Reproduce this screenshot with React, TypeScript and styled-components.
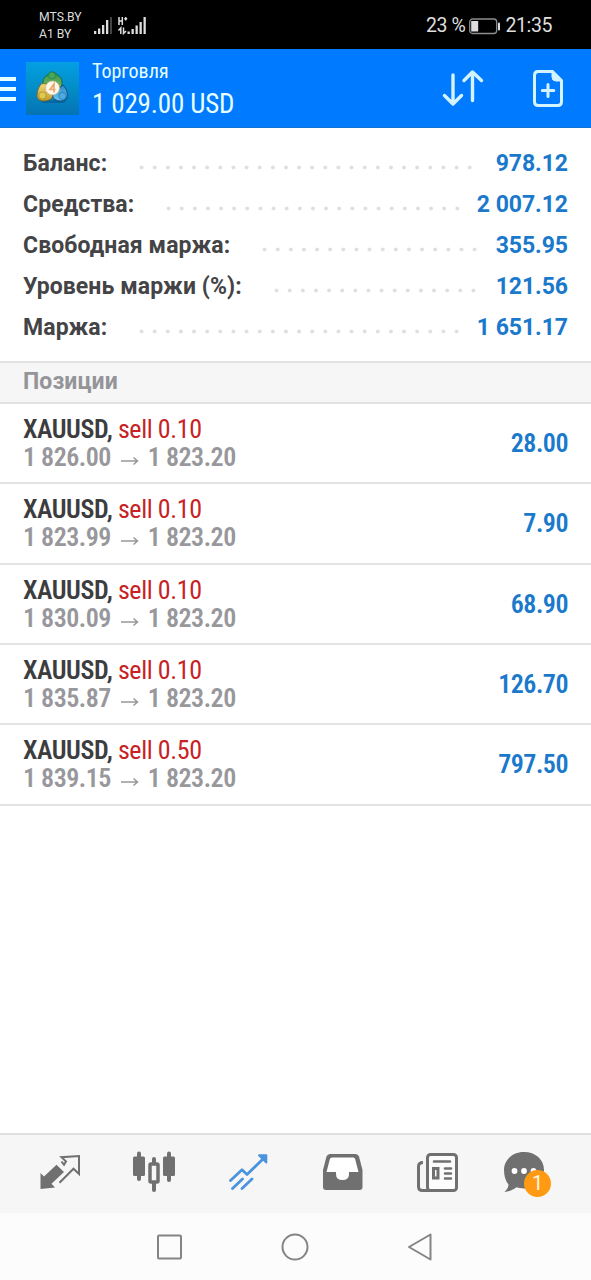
import React from "react";
import styled, { createGlobalStyle } from "styled-components";

const GlobalStyle = createGlobalStyle`
  * { box-sizing: border-box; }
  body { margin: 0; background: #fff; font-family: Roboto, "Liberation Sans", sans-serif; }
  svg { display: block; flex: none; }
`;

const Screen = styled.div`
  width: 591px;
  height: 1280px;
  display: flex;
  flex-direction: column;
  background: #fff;
  overflow: hidden;
`;

const StatusBar = styled.div`
  height: 49px;
  flex: none;
  background: #000;
  color: #dedede;
  display: flex;
  align-items: center;
  padding: 2px 39px 0;
`;

const Carriers = styled.div`
  width: 54px;
  font-size: 12.2px;
  line-height: 17px;
  white-space: nowrap;
`;

const StatusRight = styled.div`
  margin-left: auto;
  display: flex;
  align-items: center;
  gap: 4px;
  padding-top: 1px;
  font-size: 19.5px;
  letter-spacing: -0.4px;
  line-height: 24px;
  white-space: nowrap;
`;

const Header = styled.header`
  height: 79px;
  flex: none;
  background: #007aff;
  color: #e6ffff;
  display: flex;
  align-items: center;
  border-bottom: 1px solid #1672d0;
`;

const Titles = styled.div`
  margin-left: 13px;
  padding-top: 2px;
  flex: 1;
`;

const Condensed = styled.div<{ $size: number; $line: number; $weight?: number; $color?: string; $gap?: number }>`
  font-family: "Roboto Condensed", Roboto, sans-serif;
  font-stretch: 75%;
  font-size: ${(p) => p.$size}px;
  line-height: ${(p) => p.$line}px;
  font-weight: ${(p) => p.$weight ?? 400};
  color: ${(p) => p.$color ?? "inherit"};
  letter-spacing: ${(p) => p.$gap ?? 0}px;
  white-space: nowrap;
`;

const Summary = styled.section`
  height: 235px;
  flex: none;
  padding: 15px 23px 0;
  border-bottom: 2px solid #e2e2e3;
`;

const SummaryRow = styled.div`
  height: 41px;
  display: flex;
  align-items: center;
  font-size: 23px;
  letter-spacing: 0.1px;
  line-height: 41px;
  font-weight: 700;
  color: #444446;
  white-space: nowrap;
`;

const Dots = styled.div<{ $count: number }>`
  width: ${(p) => p.$count * 13.14}px;
  height: 5px;
  margin: 7px 0 0 28px;
  background: radial-gradient(circle at center, #dedee0 1.5px, transparent 2.3px) 0 0 / 13.14px 5px repeat-x;
`;

const SummaryValue = styled.span`
  margin-left: auto;
  letter-spacing: -0.05px;
  color: #1b79cc;
`;

const SectionTitle = styled.h2`
  height: 41px;
  flex: none;
  margin: 0;
  padding: 0 23px;
  background: #f6f6f7;
  border-bottom: 2px solid #e2e2e3;
  color: #949499;
  font-size: 23px;
  letter-spacing: 0.1px;
  line-height: 38px;
  font-weight: 700;
`;

const Position = styled.div`
  height: 80.33px;
  flex: none;
  padding: 0 23px;
  display: flex;
  align-items: center;
  justify-content: space-between;
  border-bottom: 2px solid #e3e3e4;
`;

const Side = styled.span`
  color: #c72225;
  font-weight: 400;
  letter-spacing: -0.4px;
`;

const Arrow = styled.span`
  display: inline-block;
  margin: 0 9px 0 10px;
  svg { display: inline-block; vertical-align: 0; }
`;

const Spacer = styled.div`
  flex: 1;
`;

const TabBar = styled.nav`
  height: 80px;
  flex: none;
  background: #f6f6f6;
  border-top: 2px solid #e0e0e0;
  display: grid;
  grid-template-columns: 119px 69px 120px 69px 122px 50px;
`;

const Tab = styled.div`
  position: relative;
  display: flex;
  align-items: center;
  justify-content: center;
  padding-bottom: 4px;
`;

const Badge = styled.span`
  position: absolute;
  left: 25px;
  top: 35px;
  width: 27px;
  height: 27px;
  border-radius: 50%;
  background: #ff9a12;
  color: #fff6e0;
  font-size: 20px;
  line-height: 27px;
  text-align: center;
`;

const SystemNav = styled.div`
  height: 67px;
  flex: none;
  background: #fcfcfc;
  display: flex;
  justify-content: center;
  align-items: center;
  gap: 98px;
`;

const summary = [
  { label: "Баланс:", value: "978.12", dots: 26 },
  { label: "Средства:", value: "2 007.12", dots: 23 },
  { label: "Свободная маржа:", value: "355.95", dots: 17 },
  { label: "Уровень маржи (%):", value: "121.56", dots: 16 },
  { label: "Маржа:", value: "1 651.17", dots: 25 },
];

const positions = [
  { lots: "0.10", open: "1 826.00", profit: "28.00" },
  { lots: "0.10", open: "1 823.99", profit: "7.90" },
  { lots: "0.10", open: "1 830.09", profit: "68.90" },
  { lots: "0.10", open: "1 835.87", profit: "126.70" },
  { lots: "0.50", open: "1 839.15", profit: "797.50" },
];

const SignalIcons = () => (
  <svg width="54" height="20" viewBox="93 15 54 20" fill="#dedede">
    <path d="M94 30h2.300v3h-2.300zM98 27.500h2.300v5.500h-2.300zM102 24h2.300v9h-2.300zM106 19h2.300v14h-2.300z" />
    <path d="M110 16h2v17h-2z" fill="#444" />
    <path d="M127.500 30.500h2.300v2.500h-2.300zM131.500 28h2.300v5h-2.300zM135.500 24.500h2.300v8.500h-2.300zM139.500 21h2.300v12h-2.300zM143.500 16h2.300v17h-2.300z" />
    <path d="M119 16v8M122.300 16v8M119 20h3.300M125.700 16v3.500M124.200 17.700h3M120.800 33v-6l-2.300 2.500M123.500 26.500v6l2.500-2.500" fill="none" stroke="#dedede" strokeWidth="1.500" />
  </svg>
);

const Battery = () => (
  <svg width="32" height="17" viewBox="0 0 32 17">
    <rect x="0.700" y="1" width="27" height="14.500" rx="3" fill="none" stroke="#8d8d8d" strokeWidth="1.300" />
    <rect x="2.200" y="3" width="7" height="10.500" fill="#dedede" />
    <rect x="29" y="4.500" width="2" height="8" rx="1" fill="#dedede" />
  </svg>
);

const MenuIcon = () => (
  <svg width="26" height="28" viewBox="0 0 26 28">
    <path d="M0 5h16M0 15h16M0 25h16" stroke="#e6ffff" strokeWidth="4" />
  </svg>
);

const Logo = () => (
  <svg width="53" height="53" viewBox="0 0 53 53">
    <defs>
      <linearGradient id="tile" x1="0.500" y1="0" x2="0.500" y2="1">
        <stop offset="0" stopColor="#049fe4" />
        <stop offset="0.500" stopColor="#038dc6" />
        <stop offset="1" stopColor="#0572b4" />
      </linearGradient>
      <linearGradient id="leaf" x1="0" y1="0" x2="0" y2="1">
        <stop offset="0" stopColor="#2f914a" />
        <stop offset="1" stopColor="#8cc76b" />
      </linearGradient>
      <linearGradient id="gold" x1="0" y1="0" x2="0" y2="1">
        <stop offset="0" stopColor="#efda79" />
        <stop offset="1" stopColor="#c29a28" />
      </linearGradient>
      <linearGradient id="azure" x1="0" y1="0" x2="0" y2="1">
        <stop offset="0" stopColor="#278ac5" />
        <stop offset="1" stopColor="#77c6ee" />
      </linearGradient>
    </defs>
    <rect width="53" height="53" fill="url(#tile)" />
    <path d="M11 36c4 3 27 3 32-1l-5 6H17z" fill="#07568b" opacity=".6" />
    <path d="M18 26c-2-7-1-11 4-13 2-4 7-4 9 0 5 2 6 7 4 13l-6 4h-7z" fill="url(#leaf)" stroke="#1c6d44" strokeWidth="1" />
    <path d="M15 22c6-2 11 3 13 9 0 5-5 8-10 8-4 0-7-2-7-5 0-4 1-8 4-12z" fill="url(#gold)" stroke="#746f33" strokeWidth="1" />
    <path d="M37 23c3 3 5 7 4 12-2 4-7 5-11 3-4-2-4-5-2-8z" fill="url(#azure)" stroke="#0e4d80" strokeWidth="1" />
    <circle cx="26" cy="13.500" r="3.500" fill="#43a65b" stroke="#247b3c" strokeWidth=".6" />
    <circle cx="16.500" cy="33.500" r="3.600" fill="#e2c84f" stroke="#9b8530" strokeWidth=".6" />
    <circle cx="36.500" cy="34" r="3.700" fill="#4cabe1" stroke="#146aa6" strokeWidth=".6" />
    <circle cx="26.500" cy="26" r="7" fill="#fff7e7" stroke="#c4b993" strokeWidth=".7" />
    <path d="M28 30.500v-8.500l-4 5.500h5.500" fill="none" stroke="#e8a66c" strokeWidth="1.600" />
  </svg>
);

const SortIcon = () => (
  <svg width="44" height="40" viewBox="441 68.500 44 40" fill="none" stroke="#d3f4ff" strokeWidth="3.400" strokeLinecap="round" strokeLinejoin="round">
    <path d="M453 75.500V104M444.500 96l8.500 8.500 8.500-8.500M472.500 101V73M464 81l8.500-8.500L481.500 81" />
  </svg>
);

const NewOrderIcon = () => (
  <svg width="32" height="38" viewBox="532 69 32 38" fill="none" stroke="#d3f4ff" strokeWidth="3">
    <path d="M538 71.500h14.500l9 9V101.500q0 4-4 4H538.500q-4 0-4-4V75.500q0-4 3.500-4z" />
    <path d="M552 71v6q0 4 4 4h6z" fill="#d3f4ff" strokeWidth="1" />
    <path d="M548 84.500v12M542.300 90.500h11.500" strokeLinecap="round" />
  </svg>
);

const QuotesIcon = () => (
  <svg width="44" height="40" viewBox="38 1153 44 40">
    <path d="M40.500 1174l3.500 3.500 12.500-11.800 7.500 7.300-12.500 11.800 3.500 3.700-14.500 1.500z" fill="#707070" />
    <path d="M61.500 1162.500l2.500 3.200 2-3.200-4.500-4.300 17.500-1.200v18l-5.500-5.300-14 14" fill="none" stroke="#707070" strokeWidth="2" />
  </svg>
);

const ChartIcon = () => (
  <svg width="44" height="42" viewBox="132 1152 44 42" fill="#707070">
    <rect x="133" y="1157.500" width="12" height="19.500" rx="1.500" />
    <rect x="137" y="1152.500" width="4" height="29.500" rx="2" />
    <rect x="163" y="1157.500" width="12" height="19.500" rx="1.500" />
    <rect x="167" y="1152.500" width="4" height="30.500" rx="2" />
    <rect x="152" y="1158" width="4" height="35" rx="2" />
    <rect x="150" y="1165" width="8" height="18" rx="1" fill="#f6f6f6" stroke="#707070" strokeWidth="3.500" />
  </svg>
);

const TradeIcon = () => (
  <svg width="42" height="40" viewBox="227 1152 42 40" fill="none" stroke="#4a93df" strokeWidth="2.800" strokeLinecap="round">
    <path d="M230.500 1180.500l11.500-10.700 5 4.700L265 1157M232.500 1188.500l10-9.500M242 1188.500l10-9.500" strokeLinejoin="round" />
    <path d="M259 1155.300h7.300v7.200z" fill="#4a93df" strokeWidth="2" strokeLinejoin="round" />
  </svg>
);

const InboxIcon = () => (
  <svg width="42" height="38" viewBox="322 1153 42 38">
    <path d="M330 1154h25.500q2.500 0 3.500 2.500l3.500 13.500v17q0 3-3 3H326q-3 0-3-3v-17l3.500-13.500q1-2.500 3.500-2.500z" fill="#707070" />
    <path d="M332 1157.500h21.500l1.500 1 3.500 13.500H349v2q0 6-6.500 6t-6.500-6v-2h-9.500l3.500-13.500z" fill="#fff" />
  </svg>
);

const NewsIcon = () => (
  <svg width="42" height="40" viewBox="417 1152 42 40" fill="none" stroke="#707070" strokeWidth="3">
    <rect x="427.500" y="1154.500" width="29" height="36" rx="3" fill="#fcfcfc" />
    <path d="M423 1162.500q-4.500 0-4.500 4v20q0 4 4 4H430" />
    <path d="M434 1161.500h16M445 1168.500h6M445 1173.500h6M445 1178.500h6" strokeWidth="2.600" strokeLinecap="round" />
    <rect x="433.500" y="1168.500" width="4.500" height="9.500" />
  </svg>
);

const MessagesIcon = () => (
  <svg width="42" height="42" viewBox="503 1151 42 42">
    <path d="M524 1152c11.500 0 20 7.500 20 18s-8.500 18.500-20 18.500c-3 0-5-.5-7.500-1.200-4 2.700-7 4.200-12 4.700q4-4 4-7.500-4.500-5.500-4.500-14.500c0-10.500 9-18 20-18z" fill="#707070" />
    <path d="M514.500 1171h.01M524 1171h.01M533.500 1171h.01" stroke="#fff" strokeWidth="5.800" strokeLinecap="round" />
  </svg>
);

const RecentsIcon = () => (
  <svg width="26" height="26" viewBox="0 0 26 26" fill="none" stroke="#848484" strokeWidth="2">
    <rect x="1" y="1.500" width="23" height="23" rx="1" />
  </svg>
);

const HomeIcon = () => (
  <svg width="28" height="28" viewBox="0 0 28 28" fill="none" stroke="#848484" strokeWidth="2">
    <circle cx="14" cy="14" r="12.500" />
  </svg>
);

const BackIcon = () => (
  <svg width="28" height="28" viewBox="0 0 28 28" fill="none" stroke="#848484" strokeWidth="2" strokeLinejoin="round">
    <path d="M23.500 1.500v25L2 14z" />
  </svg>
);

const HeaderActions = styled.div`
  display: flex;
  align-items: center;
  gap: 47px;
  padding-right: 27px;
`;

export default function App() {
  return (
    <Screen>
      <GlobalStyle />
      <StatusBar>
        <Carriers>
          <div>MTS.BY</div>
          <div>A1 BY</div>
        </Carriers>
        <SignalIcons />
        <StatusRight>
          <span>23 %</span>
          <Battery />
          <span>21:35</span>
        </StatusRight>
      </StatusBar>
      <Header>
        <MenuIcon />
        <Logo />
        <Titles>
          <Condensed $size={20} $line={30}>Торговля</Condensed>
          <Condensed $size={27} $line={37} $gap={-0.15}>1 029.00 USD</Condensed>
        </Titles>
        <HeaderActions>
          <SortIcon />
          <NewOrderIcon />
        </HeaderActions>
      </Header>
      <Summary>
        {summary.map((row) => (
          <SummaryRow key={row.label}>
            <span>{row.label}</span>
            <Dots $count={row.dots} />
            <SummaryValue>{row.value}</SummaryValue>
          </SummaryRow>
        ))}
      </Summary>
      <SectionTitle>Позиции</SectionTitle>
      {positions.map((p) => (
        <Position key={p.open}>
          <div>
            <Condensed $size={26} $line={28} $weight={640} $color="#3d3d3f" $gap={-0.45}>
              XAUUSD, <Side>sell {p.lots}</Side>
            </Condensed>
            <Condensed $size={26} $line={28} $weight={620} $color="#98989c" $gap={-0.5}>
              {p.open}
              <Arrow>
                <svg width="18" height="10" viewBox="0 0 18 10" fill="none" stroke="#98989c" strokeWidth="1.500">
                  <path d="M0 5h16M12.500 1.500L16.500 5l-4 3.500" />
                </svg>
              </Arrow>
              1 823.20
            </Condensed>
          </div>
          <Condensed $size={26} $line={28} $weight={640} $color="#1b79cc" $gap={-0.5}>{p.profit}</Condensed>
        </Position>
      ))}
      <Spacer />
      <TabBar>
        <Tab><QuotesIcon /></Tab>
        <Tab><ChartIcon /></Tab>
        <Tab><TradeIcon /></Tab>
        <Tab><InboxIcon /></Tab>
        <Tab><NewsIcon /></Tab>
        <Tab>
          <MessagesIcon />
          <Badge>1</Badge>
        </Tab>
      </TabBar>
      <SystemNav>
        <RecentsIcon />
        <HomeIcon />
        <BackIcon />
      </SystemNav>
    </Screen>
  );
}
